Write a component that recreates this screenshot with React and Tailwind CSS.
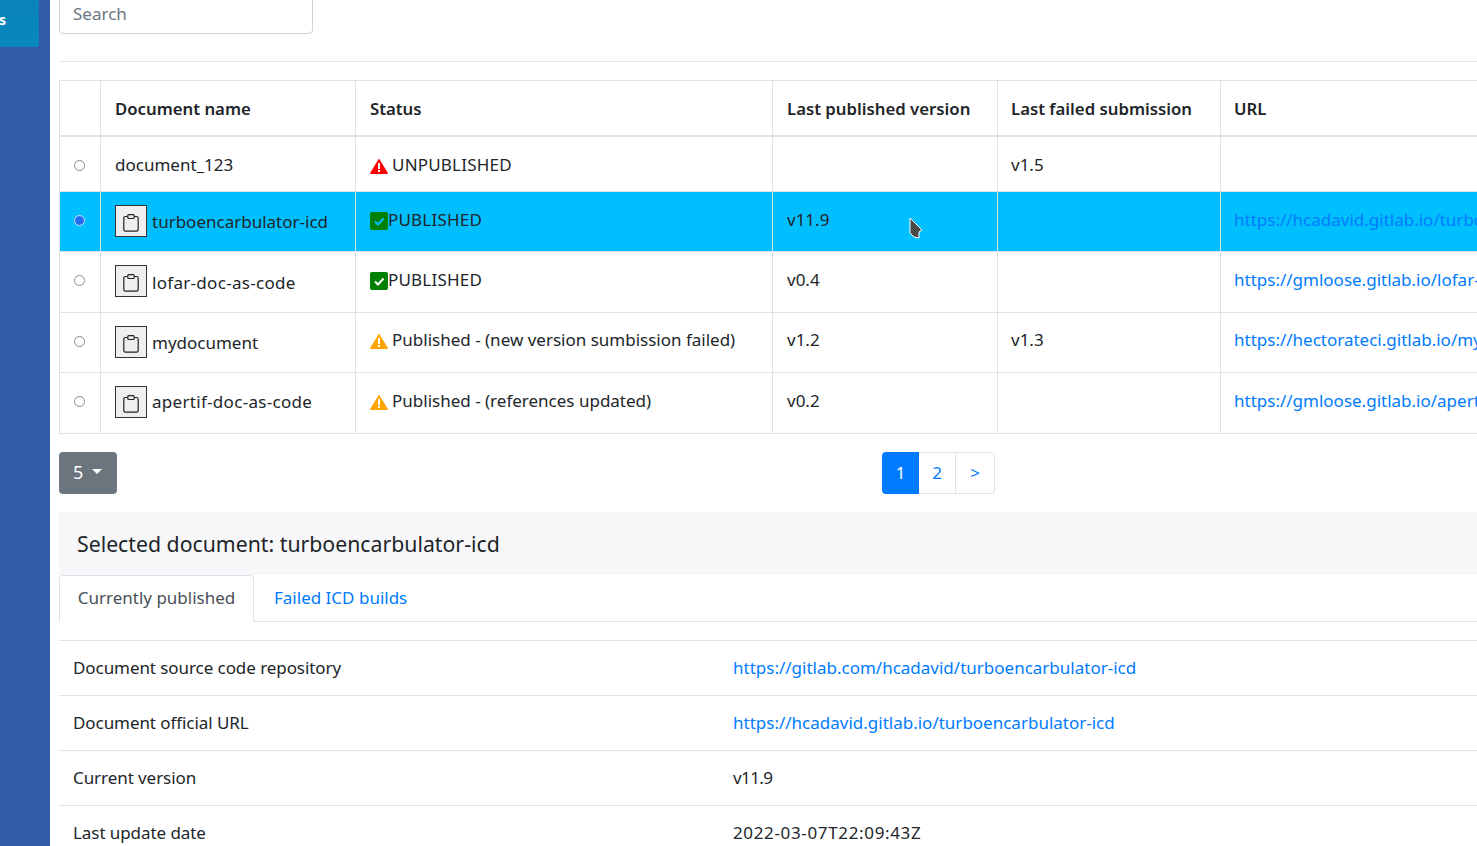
import React from 'react'

const DOCS = [
  { name: 'document_123', status: 'error', label: 'UNPUBLISHED', version: '', failed: 'v1.5', url: '', h: 'h-[56px]', top: 'pt-[15px]' },
  { name: 'turboencarbulator-icd', status: 'ok', label: 'PUBLISHED', version: 'v11.9', failed: '', url: 'https://hcadavid.gitlab.io/turboencarbulator-icd', selected: true, h: 'h-[60px]', top: 'pt-[15px]' },
  { name: 'lofar-doc-as-code', nameClass: 'tracking-[0.3px] pt-[3px]', status: 'ok', label: 'PUBLISHED', version: 'v0.4', failed: '', url: 'https://gmloose.gitlab.io/lofar-doc-as-code', h: 'h-[61px]', top: 'pt-[15px]' },
  { name: 'mydocument', status: 'warn', label: 'Published - (new version sumbission failed)', version: 'v1.2', failed: 'v1.3', url: 'https://hectorateci.gitlab.io/mydocument', h: 'h-[60px]', top: 'pt-[14px]' },
  { name: 'apertif-doc-as-code', nameClass: 'tracking-[0.3px]', status: 'warn', label: 'Published - (references updated)', version: 'v0.2', failed: '', url: 'https://gmloose.gitlab.io/apertif-doc-as-code', h: 'h-[61px]', top: 'pt-[15px]' },
]

const DETAILS = [
  ['Document source code repository', 'https://gitlab.com/hcadavid/turboencarbulator-icd', 'text-[#007bff]'],
  ['Document official URL', 'https://hcadavid.gitlab.io/turboencarbulator-icd', 'text-[#007bff]'],
  ['Current version', 'v11.9', 'tracking-[-0.6px]'],
  ['Last update date', '2022-03-07T22:09:43Z', 'tracking-[0.65px]'],
]

function Triangle({ color }) {
  return (
    <svg width="18" height="16" viewBox="0 0 18 16" className="block shrink-0">
      <path d="M9 0.5 L18 15.2 Q18 16 17 16 L1 16 Q0 16 0 15.2 Z" fill={color} />
      <rect x="8" y="5" width="2" height="6" fill="#fff" />
      <rect x="8" y="12" width="2" height="2" fill="#fff" />
    </svg>
  )
}

function CheckBox({ selected }) {
  return (
    <svg width="18" height="18" viewBox="0 0 18 18" className="block shrink-0">
      <rect width="18" height="18" rx="2" fill="#008000" />
      <path d="M5 9.5 L8 12.5 L13.5 6.5" fill="none" stroke={selected ? '#00bfff' : '#fff'} strokeWidth="2" />
    </svg>
  )
}

function ClipboardButton() {
  return (
    <button className="w-[32px] h-[32px] shrink-0 flex items-center justify-center bg-[#efefef] border border-[#333]">
      <svg width="16" height="18" viewBox="0 0 16 18" fill="none" stroke="#222" strokeWidth="1.2" className="mt-[4px]">
        <path d="M4.5 2.5 H2.5 Q0.8 2.5 0.8 4.2 V15.5 Q0.8 17.2 2.5 17.2 H13.5 Q15.2 17.2 15.2 15.5 V4.2 Q15.2 2.5 13.5 2.5 H11.5" />
        <rect x="4.8" y="0.7" width="6.4" height="3.8" rx="1" />
      </svg>
    </button>
  )
}

function DocRow({ doc }) {
  const rowBg = doc.selected ? 'bg-[#00bfff]' : 'bg-white'
  const cell = 'border border-[#dee2e6] align-top'
  return (
    <tr className={`${rowBg} ${doc.h}`}>
      <td className={`${cell} pt-[23px] pl-[14px]`}>
        {doc.selected ? (
          <span className="block w-[11px] h-[11px] rounded-full bg-[#1f6ff0] border border-[#cfe0ff]" />
        ) : (
          <span className="block w-[11px] h-[11px] rounded-full bg-white border border-[#8a8a8a]" />
        )}
      </td>
      <td className={`${cell} px-[14px] ${doc.url ? 'pt-[13px]' : 'pt-[15px]'}`}>
        {doc.url ? (
          <div className="flex items-center gap-[5px]">
            <ClipboardButton />
            <span className={doc.nameClass || 'pt-[1px]'}>{doc.name}</span>
          </div>
        ) : (
          doc.name
        )}
      </td>
      <td className={`${cell} px-[14px] ${doc.top}`}>
        <div className="flex items-start">
          {doc.status === 'ok' && <span className="mt-[5px]"><CheckBox selected={doc.selected} /></span>}
          {doc.status === 'error' && <span className="mr-[4px] mt-[6px]"><Triangle color="#ff0000" /></span>}
          {doc.status === 'warn' && <span className="mr-[4px] mt-[6px]"><Triangle color="#ffa500" /></span>}
          <span className={doc.status === 'warn' ? '' : 'tracking-[0.2px]'}>{doc.label}</span>
        </div>
      </td>
      <td className={`${cell} px-[14px] ${doc.top}`}>{doc.version}</td>
      <td className={`${cell} pl-[13px] pr-[14px] ${doc.top}`}>{doc.failed}</td>
      <td className={`${cell} pl-[13px] pr-[14px] ${doc.top} whitespace-nowrap text-[#007bff]`}>{doc.url}</td>
    </tr>
  )
}

export default function App() {
  return (
    <div className="h-[846px] w-[1477px] overflow-hidden flex bg-white text-[#212529] text-[17px] leading-[25.5px] font-['Noto_Sans','DejaVu_Sans',sans-serif]">
      {/* sidebar */}
      <aside className="w-[50px] shrink-0 bg-[#335ca8]">
        <div className="w-[39px] h-[47px] rounded-br-[2px] bg-gradient-to-b from-[#0a84bc] to-[#0788bb] text-white font-bold text-[14px] flex items-center pb-[7px] overflow-hidden">
          <span className="-ml-[1px]">s</span>
        </div>
      </aside>

      {/* main */}
      <main className="flex-1 min-w-0 overflow-hidden pl-[9px] -mt-[4px]">
        <div className="w-[254px] h-[38px] border border-[#ced4da] rounded-[4px] pl-[13px] pb-[2px] flex items-center text-[#6c757d]">Search</div>
        <div className="h-px bg-[#e4e6ea] mt-[27px] mb-[18px]" />

        <table className="table-fixed border-collapse w-[1700px]">
          <colgroup>
            <col className="w-[41px]" />
            <col className="w-[255px]" />
            <col className="w-[417px]" />
            <col className="w-[225px]" />
            <col className="w-[223px]" />
            <col />
          </colgroup>
          <thead>
            <tr className="h-[55px] text-left text-[16.75px]">
              <th className="border border-[#dee2e6] border-b-2" />
              <th className="border border-[#dee2e6] border-b-2 px-[14px] pt-[1px] font-semibold">Document name</th>
              <th className="border border-[#dee2e6] border-b-2 px-[14px] pt-[1px] font-semibold">Status</th>
              <th className="border border-[#dee2e6] border-b-2 px-[14px] pt-[1px] font-semibold">Last published version</th>
              <th className="border border-[#dee2e6] border-b-2 pl-[13px] pr-[14px] pt-[1px] font-semibold">Last failed submission</th>
              <th className="border border-[#dee2e6] border-b-2 pl-[13px] pr-[14px] pt-[1px] font-semibold">URL</th>
            </tr>
          </thead>
          <tbody>
            {DOCS.map(d => <DocRow key={d.name} doc={d} />)}
          </tbody>
        </table>

        <div className="relative mt-[18px] h-[42px]">
          <button className="w-[58px] h-[42px] rounded-[4px] bg-[#6c757d] text-white flex items-center pl-[14px] pb-[1px] gap-[9px] text-[18px]">
            5
            <span className="w-0 h-0 border-x-[5px] border-x-transparent border-t-[5px] border-t-white -mt-[2px]" />
          </button>
          <div className="absolute left-[823px] top-0 flex h-[42px]">
            <span className="w-[37px] flex items-center justify-center bg-[#007bff] text-white rounded-l-[4px]">1</span>
            <span className="w-[36px] flex items-center justify-center text-[#007bff] border-y border-[#dee2e6]">2</span>
            <span className="w-[40px] flex items-center justify-center text-[#007bff] border border-[#dee2e6] rounded-r-[4px]">&gt;</span>
          </div>
        </div>

        <div className="mt-[18px] h-[63px] bg-[#f7f7f9] pl-[18px] flex items-center text-[21.25px]">
          Selected document: turboencarbulator-icd
        </div>

        <div className="h-[47px] flex border-b border-[#dee2e6]">
          <div className="w-[195px] h-[47px] border border-[#dee2e6] border-b-white bg-white rounded-t-[4px] flex items-center justify-center pb-[2px] text-[#495057]">Currently published</div>
          <div className="px-[20px] flex items-center text-[#007bff]">Failed ICD builds</div>
        </div>

        <div className="mt-[18px]">
          {DETAILS.map(([label, value, valueClass]) => (
            <div key={label} className="h-[55px] border-t border-[#dee2e6] grid grid-cols-[660px_1fr] items-center pl-[14px]">
              <span className="tracking-[-0.07px]">{label}</span>
              <span className={valueClass}>{value}</span>
            </div>
          ))}
        </div>
      </main>

      {/* mouse pointer in the capture */}
      <svg className="absolute left-[908px] top-[217px]" width="16" height="24" viewBox="0 0 16 24">
        <path d="M2 1 L14 13 L11 15 L11 21 L6 20 L2 16 Z" fill="#4a4a4a" stroke="#fff" strokeWidth="1" />
      </svg>
    </div>
  )
}
